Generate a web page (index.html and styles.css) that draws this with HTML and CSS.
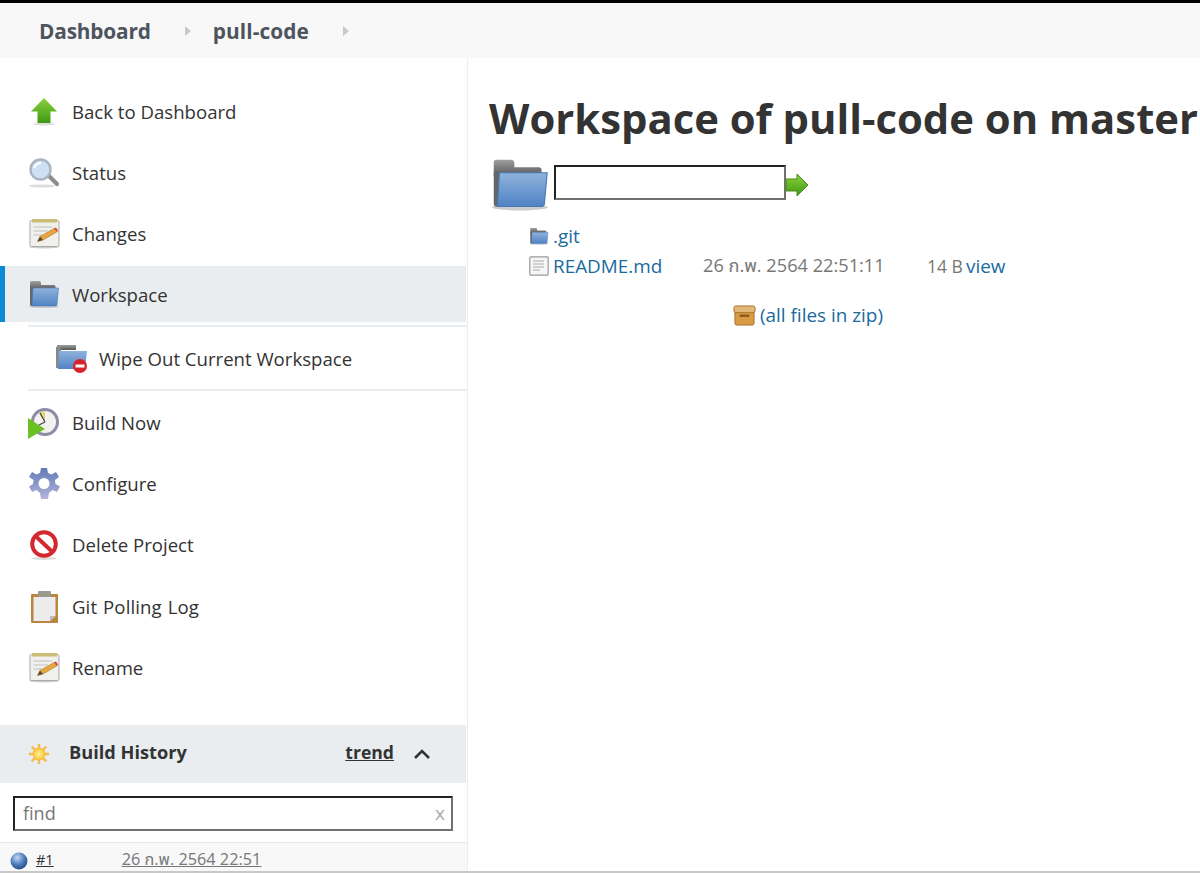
FILE: index.html
```html
<!DOCTYPE html>
<html lang="en">
<head>
<meta charset="utf-8">
<title>Workspace of pull-code on master</title>
<link rel="stylesheet" href="styles.css">
</head>
<body>
<svg class="defs" width="0" height="0" aria-hidden="true">
  <defs>
    <linearGradient id="gFolder" x1="0" y1="0" x2="0" y2="1"><stop offset="0" stop-color="#8fb2dc"/><stop offset="1" stop-color="#4f83c4"/></linearGradient>
    <linearGradient id="gGrey" x1="0" y1="0" x2="0" y2="1"><stop offset="0" stop-color="#a0a0a0"/><stop offset="1" stop-color="#555"/></linearGradient>
    <linearGradient id="gGreen" x1="0" y1="0" x2="0" y2="1"><stop offset="0" stop-color="#8cd03c"/><stop offset="1" stop-color="#3c9a12"/></linearGradient>
    <linearGradient id="gGear" x1="0" y1="0" x2="0" y2="1"><stop offset="0" stop-color="#5f7cb4"/><stop offset="1" stop-color="#b4b4dc"/></linearGradient>
    <radialGradient id="gBall" cx=".4" cy=".3" r=".8"><stop offset="0" stop-color="#c6d9f0"/><stop offset=".5" stop-color="#4d7fc0"/><stop offset="1" stop-color="#1f3f78"/></radialGradient>
    <radialGradient id="gSun" cx=".5" cy=".5" r=".5"><stop offset="0" stop-color="#fff2a0"/><stop offset=".7" stop-color="#fbd24a"/><stop offset="1" stop-color="#f5b335"/></radialGradient>
    <symbol id="i-folder" viewBox="0 0 32 32">
      <ellipse cx="16" cy="28.500" rx="15" ry="1.600" fill="#ccc"/>
      <path d="M2 4.500Q2 3 3.500 3H11Q13 3 13 5V7H26Q27.500 7 27.500 8.500V12H2Z" fill="url(#gGrey)"/>
      <path d="M2 10H8V28H3.500Q2 28 2 26.500Z" fill="#666"/>
      <path d="M5 10H30.500L29 26.500Q29 28 27 28H4Z" fill="url(#gFolder)" stroke="#4a78b4" stroke-width=".6"/>
    </symbol>
    <symbol id="i-notepad" viewBox="0 0 32 32">
      <ellipse cx="16" cy="29" rx="15" ry="1.500" fill="#ccc"/>
      <rect x="2" y="2.500" width="29" height="26" rx="1.500" fill="#f0f0ec" stroke="#aaa"/>
      <rect x="4" y="1" width="25" height="3.500" fill="#c9bc74"/>
      <path d="M5.500 9H24M5.500 13H20M5.500 17H14" stroke="#cfcfcf" stroke-width="1.500"/>
      <path d="M9.500 23.500L12 18.500L27 10L29.500 13.500L15 22Z" fill="#e9a63c" stroke="#a8742a" stroke-width=".6"/>
      <path d="M26 10.500L28 9.500L30 12.500L28.500 13.500Z" fill="#e0453a"/>
      <path d="M9.500 23.500L12 18.500L15 22Z" fill="#5a4a32"/>
    </symbol>
  </defs>
</svg>

<header class="crumbs">
  <a class="crumb" href="#">Dashboard</a>
  <span class="sep"></span>
  <a class="crumb" href="#">pull-code</a>
  <span class="sep"></span>
</header>

<div class="page">
  <aside class="side">
    <nav class="tasks">
      <a class="task" href="#">
        <svg class="ico" viewBox="0 0 32 32"><ellipse cx="16" cy="28" rx="11" ry="1.500" fill="#ddd"/><path d="M16 2L29 15.500H22.500V27H9.500V15.500H3Z" fill="url(#gGreen)"/></svg>
        <span>Back to Dashboard</span>
      </a>
      <a class="task" href="#">
        <svg class="ico" viewBox="0 0 32 32"><ellipse cx="14" cy="29" rx="13" ry="1.600" fill="#ddd"/><path d="M19 20L22 17L31 26Q31.500 28 30 29Q28.500 29.500 27.500 28.500Z" fill="#8e8e8e"/><circle cx="12.500" cy="12.500" r="10" fill="#cfe0f5" stroke="#aab4c0" stroke-width="2.400"/><path d="M6 11Q8 6 13 6" stroke="#fff" stroke-width="2" fill="none"/></svg>
        <span>Status</span>
      </a>
      <a class="task" href="#">
        <svg class="ico"><use href="#i-notepad"/></svg>
        <span>Changes</span>
      </a>
      <a class="task task-on" href="#">
        <svg class="ico"><use href="#i-folder"/></svg>
        <span>Workspace</span>
      </a>
      <div class="subtasks">
        <a class="task task-sub" href="#">
          <svg class="ico" viewBox="0 0 32 32"><path d="M2 3H21V8H2Z" fill="url(#gGrey)"/><path d="M1 5H6V26H1Z" fill="#888"/><path d="M4 9H32L30 27H3Z" fill="url(#gFolder)"/><ellipse cx="25" cy="24" rx="7" ry="7" fill="#d8222a"/><rect x="20.500" y="22.500" width="9" height="3" fill="#fff"/></svg>
          <span>Wipe Out Current Workspace</span>
        </a>
      </div>
      <a class="task" href="#">
        <svg class="ico" viewBox="0 0 32 32"><circle cx="17" cy="15" r="14" fill="#8d8ba8"/><circle cx="17" cy="15" r="11" fill="#f3f2ee"/><path d="M17 15L11 5.500Q14 4 17 4Z" fill="#e8d27a"/><path d="M17 15L12 6M17 15L11 18" stroke="#444" stroke-width="1.300"/><path d="M0 11L17 22L0 32Z" fill="#6cc024"/></svg>
        <span>Build Now</span>
      </a>
      <a class="task" href="#">
        <svg class="ico" viewBox="0 0 32 32"><path d="M13 0H19L20 5L23.500 6.500L28 4L31 9L27 12L27.500 16L32 18.500L29 24L24.500 22L21 25L20 31H13L12 25L8.500 22L4 24L1 18.500L5 16L5.500 12L1 9L4 4L8.500 6.500L12 5Z" fill="url(#gGear)"/><circle cx="16" cy="15.500" r="5.500" fill="#fff"/></svg>
        <span>Configure</span>
      </a>
      <a class="task" href="#">
        <svg class="ico" viewBox="0 0 32 32"><ellipse cx="16" cy="29.500" rx="13" ry="1.500" fill="#ddd"/><circle cx="16" cy="15" r="11.800" fill="#fff" stroke="#d5282e" stroke-width="4"/><path d="M7.500 7L24.500 23" stroke="#d5282e" stroke-width="4"/></svg>
        <span>Delete Project</span>
      </a>
      <a class="task task-log" href="#">
        <svg class="ico" viewBox="0 0 32 32"><rect x="3" y="3" width="27" height="29" rx="1" fill="#b8863e"/><path d="M5.500 6H27.500V25L22 30H5.500Z" fill="#ececec"/><path d="M22 30V25H27.500Z" fill="#bbb"/><rect x="10" y="0" width="13" height="6" rx="1" fill="#9a9a90"/></svg>
        <span>Git Polling Log</span>
      </a>
      <a class="task" href="#">
        <svg class="ico"><use href="#i-notepad"/></svg>
        <span>Rename</span>
      </a>
    </nav>

    <section class="history">
      <div class="hist-head">
        <svg class="sun" viewBox="0 0 24 24"><g stroke="#f7b955" stroke-width="2.600"><path d="M12 1V23M1 12H23M4 4L20 20M20 4L4 20"/></g><circle cx="12" cy="12" r="7" fill="url(#gSun)"/></svg>
        <strong class="hist-title">Build History</strong>
        <a class="trend" href="#">trend</a>
        <svg class="chev" viewBox="0 0 18 12"><path d="M2 10L9 3L16 10" fill="none" stroke="#333" stroke-width="2.600"/></svg>
      </div>
      <div class="find-wrap">
        <div class="find"><span class="find-ph">find</span><span class="find-x">x</span></div>
      </div>
      <div class="build">
        <svg class="ball" viewBox="0 0 18 18"><circle cx="9" cy="9" r="8.500" fill="url(#gBall)"/></svg>
        <a class="build-no" href="#">#1</a>
        <a class="build-date" href="#">26 ก.พ. 2564 22:51</a>
      </div>
    </section>
  </aside>

  <main class="main">
    <h1 class="title">Workspace of pull-code on master</h1>
    <div class="path-row">
      <svg class="big-folder"><use href="#i-folder"/></svg>
      <div class="path-box"></div>
      <svg class="go" viewBox="0 0 24 24"><path d="M1 6H12V1L23 12L12 23V18H1Z" fill="url(#gGreen)" stroke="#4c8a1e"/></svg>
    </div>
    <div class="files">
      <div class="file">
        <svg class="file-ico"><use href="#i-folder"/></svg>
        <a class="link" href="#">.git</a>
      </div>
      <div class="file">
        <svg class="file-ico" viewBox="0 0 20 20"><rect x=".8" y=".8" width="18.400" height="18.400" rx="1" fill="#f6f6f6" stroke="#999" stroke-width="1.200"/><path d="M4 5H15M4 8H15M4 11H15M4 14H11" stroke="#c4c4c4" stroke-width="1.300"/></svg>
        <a class="link file-name" href="#">README.md</a>
        <span class="file-date">26 ก.พ. 2564 22:51:11</span>
        <span class="file-size">14 B</span>
        <a class="link" href="#">view</a>
      </div>
    </div>
    <div class="zip">
      <svg class="zip-ico" viewBox="0 0 24 24"><rect x="2" y="7" width="20" height="15" rx="2" fill="#d99a44" stroke="#a8722c"/><rect x="1" y="2" width="22" height="7" rx="2" fill="#e2b878" stroke="#a8722c"/><rect x="7" y="11" width="10" height="2.500" fill="#8a5a1e"/></svg>
      <a class="link" href="#">(all files in zip)</a>
    </div>
  </main>
</div>
<div class="scrollbar"></div>
</body>
</html>
```
FILE: styles.css
```css
* { box-sizing: border-box; }
html, body { margin: 0; height: 873px; overflow: hidden; }
body {
  background: #fff;
  color: #333;
  font-family: "Open Sans", "Noto Sans", "Noto Sans Thai", sans-serif;
  font-size: 18.6px;
  position: relative;
}
a { text-decoration: none; color: inherit; }
.defs { position: absolute; }

.crumbs {
  height: 58px;
  border-top: 3px solid #000;
  background: #f8f8f8;
  display: flex;
  align-items: center;
  padding: 0 0 0 39px;
}
.crumb { font-size: 20.8px; font-weight: 700; color: #4d545d; letter-spacing: -.15px; }
.crumb:nth-of-type(n+2) { letter-spacing: .1px; }
.sep {
  width: 0; height: 0;
  border-left: 6px solid #c8c8c8;
  border-top: 5px solid transparent;
  border-bottom: 5px solid transparent;
  margin: 0 22px 0 34px;
}
.sep:last-child { margin-left: 34px; }

.page { display: flex; height: 815px; overflow: hidden; }
.side {
  width: 468px;
  flex: none;
  border-right: 1px solid #eee;
  display: flex;
  flex-direction: column;
  padding-top: 23px;
  overflow: hidden;
}
.tasks { display: flex; flex-direction: column; height: 644px; flex: none; }
.task {
  display: flex;
  align-items: center;
  height: 61px;
  flex: none;
  padding-left: 28px;
  gap: 12px;
  color: #333;
}
.task-log { margin-top: 1px; word-spacing: 1px; letter-spacing: .1px; }
.ico { width: 32px; height: 32px; flex: none; }
.task-on {
  height: 56px;
  margin-top: 2px;
  background: #e9edf0;
  border-left: 5px solid #0b8ad6;
  padding-left: 23px;
  margin-right: 1px;
}
.subtasks {
  margin: 3px 0 1px 28px;
  border-top: 2px solid #e9edf0;
  border-bottom: 2px solid #e9edf0;
}
.task-sub { height: 62px; padding-left: 27px; }

.history { display: flex; flex-direction: column; flex: none; }
.hist-head {
  height: 58px;
  flex: none;
  background: #e9edf0;
  display: flex;
  align-items: center;
  padding: 0 0 4px 28px;
  margin-right: 1px;
}
.sun { width: 22px; height: 22px; flex: none; margin-top: 4px; }
.hist-title { margin-left: 19px; font-weight: 700; color: #333; font-size: 18.2px; }
.trend { margin-left: auto; font-weight: 700; text-decoration: underline; font-size: 17.6px; }
.chev { width: 18px; height: 12px; margin: 4px 35px 0 19px; }
.find-wrap { padding: 13px 14px 11px 13px; border-bottom: 1px solid #e6e6e6; flex: none; }
.find {
  height: 35px;
  border: 2px solid;
  border-color: #222 #707070 #707070 #222;
  display: flex;
  align-items: center;
  justify-content: space-between;
  padding: 0 6px 2px 8px;
  background: #fff;
}
.find-ph { color: #757575; font-size: 18px; }
.find-x { color: #aaa; font-size: 19px; }
.build {
  height: 40px;
  flex: none;
  background: #f8f8f8;
  display: flex;
  align-items: flex-start;
  padding: 5px 0 0 10px;
  font-size: 16.3px;
}
.ball { width: 18px; height: 18px; margin-top: 4px; flex: none; }
.build-no { margin-left: 8px; text-decoration: underline; color: #333; font-size: 14.5px; margin-top: 2px; }
.build-date { margin-left: 68px; text-decoration: underline; color: #777; }

.main { flex: 1; min-width: 0; padding: 0 0 0 21px; }
.title {
  margin: 30px 0 0;
  font-size: 41.8px;
  font-weight: 700;
  line-height: 60px;
  color: #333;
  white-space: nowrap;
}
.path-row { display: flex; align-items: flex-start; margin-top: 10px; height: 54px; padding-left: 1px; }
.big-folder { width: 60px; height: 60px; flex: none; margin-top: -4px; }
.path-box {
  width: 232px; height: 35px;
  margin: 7px 0 0 4px;
  border: 2px solid;
  border-color: #222 #707070 #707070 #222;
  background: #fff;
}
.go { width: 24px; height: 24px; margin: 15px 0 0 -1px; flex: none; }
.files { margin-top: 9px; padding-left: 40px; display: flex; flex-direction: column; }
.file { display: flex; align-items: center; height: 30px; }
.file-ico { width: 20px; height: 20px; flex: none; margin-right: 4px; }
.link { color: #1a6a9e; font-weight: 500; font-size: 18.9px; }
.file-name { width: 150px; }
.file-date { color: #777; width: 224px; font-size: 18.2px; }
.file-size { color: #777; width: 39px; font-size: 17.5px; }
.zip {
  display: flex;
  align-items: center;
  justify-content: center;
  width: 638px;
  margin-top: 19px;
  gap: 4px;
  height: 30px;
}
.zip-ico { width: 23px; height: 23px; flex: none; }
.scrollbar {
  position: absolute;
  left: 0; right: 0; bottom: 0;
  height: 2px;
  background: #c8c8c8;
}
```
